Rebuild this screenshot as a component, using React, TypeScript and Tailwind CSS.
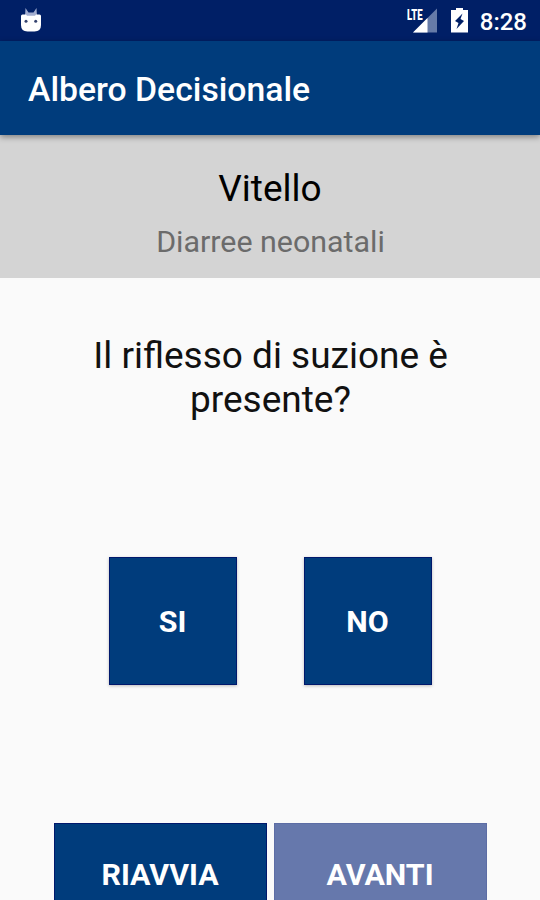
import type { ReactNode } from "react";

function StatusBar() {
    return (
        <div className="h-[41px] shrink-0 bg-[#001f66] flex items-center justify-between pl-[20px] pr-[13px] text-white">
            <svg className="w-[22px] h-[26px]" viewBox="0 0 22 26">
                <path d="M5 8.500L5.500 0 8.500 4.500h5L16.500 0 17 8.500z" fill="#a3aed0" />
                <path d="M1 8Q1 6.500 2.500 6.500H6l1 1.300h8l1-1.300h3.500Q21 6.500 21 8v9q0 6.500-6.500 6.500h-7Q1 23.500 1 17z" fill="#fff" />
                <circle cx="6" cy="13.200" r="1.500" fill="#35436f" />
                <circle cx="15.700" cy="13.200" r="1.500" fill="#35436f" />
            </svg>
            <div className="flex items-center">
                <svg className="w-[30px] h-[26px]" viewBox="0 0 30 26">
                    <path d="M30 0.500V24.500H6z" fill="#667ba8" />
                    <path d="M20.500 10V24.500H6z" fill="#fff" />
                    <text x="0" y="11.500" fontSize="14" fontWeight="900" textLength="15.500" lengthAdjust="spacingAndGlyphs" fill="#fff" stroke="#001f66" strokeWidth="1.500" paintOrder="stroke">
                        LTE
                    </text>
                </svg>
                <svg className="ml-[14px] w-[17px] h-[26px]" viewBox="0 0 17 26">
                    <path d="M5 -0.500h7v2.500h5V24.500H0V2h5z" fill="#fff" />
                    <path d="M11.500 5.500L4 13l3.500 2L5.500 21 13 13l-3.500-2z" fill="#001f66" />
                </svg>
                <span className="ml-[12px] mt-[3px] text-[24px] leading-none font-medium">8:28</span>
            </div>
        </div>
    );
}

function AnswerButton({ children }: { children: ReactNode }) {
    return (
        <button className="w-[128px] h-[128px] pt-[2px] bg-[#003c7c] border border-[#00186c] text-white text-[30.4px] font-bold shadow-[0_1px_3px_rgba(0,0,0,0.25)]">
            {children}
        </button>
    );
}

export default function App() {
    return (
        <div className="w-full h-[900px] flex flex-col overflow-hidden bg-[#fafafa] font-[Roboto,sans-serif]">
            <StatusBar />
            <header className="relative h-[94px] shrink-0 bg-[#003c7c] flex items-center pl-[28px] pt-[4px] shadow-[0_2px_6px_rgba(0,0,0,0.4)]">
                <h1 className="text-white text-[33.75px] font-medium">Albero Decisionale</h1>
            </header>
            <section className="h-[143px] shrink-0 bg-[#d4d4d4] pt-[32px] text-center">
                <h2 className="text-[37px] leading-[44px] text-black">Vitello</h2>
                <p className="mt-[13px] pl-px text-[30.4px] leading-[36px] text-[#6b6b6b]">Diarree neonatali</p>
            </section>
            <main className="flex flex-col">
                <p className="mt-[56px] pl-[81px] pr-20 text-center text-[37px] leading-[44px] text-[#111111]">
                    Il riflesso di suzione è presente?
                </p>
                <div className="mt-[135px] flex justify-center gap-[67px]">
                    <AnswerButton>SI</AnswerButton>
                    <AnswerButton>NO</AnswerButton>
                </div>
                <div className="mt-[138px] flex justify-center gap-[7px] text-white text-[30.4px] font-bold">
                    <button className="w-[213px] h-[102px] pt-px bg-[#003c7c] border border-[#00186c]">RIAVVIA</button>
                    <button className="w-[213px] h-[102px] pt-px bg-[#6678ac] border border-[#5d6da5]">AVANTI</button>
                </div>
            </main>
        </div>
    );
}
